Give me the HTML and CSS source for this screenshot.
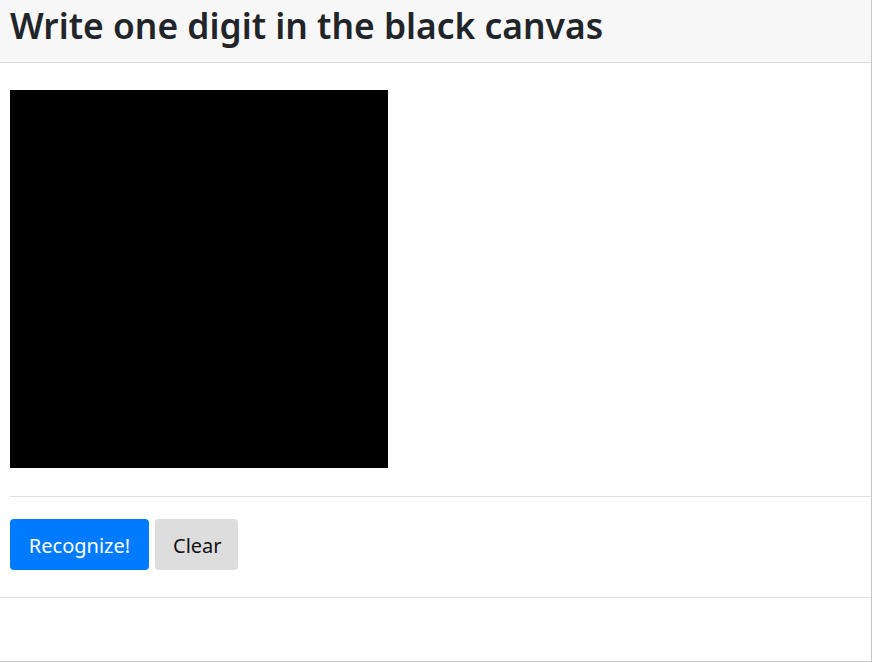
FILE: index.html
```html
<!DOCTYPE html>
<html>
<head>
<meta charset="utf-8">
<link rel="stylesheet" href="styles.css">
</head>
<body>
<div class="frame">
  <header class="head">
    <h1 class="title">Write one digit in the black canvas</h1>
  </header>
  <main class="body">
    <div class="canvas"></div>
    <hr class="rule">
    <div class="actions">
      <button class="btn btn-primary">Recognize!</button>
      <button class="btn btn-light">Clear</button>
    </div>
  </main>
  <div class="foot"></div>
</div>
</body>
</html>
```
FILE: styles.css
```css
html, body {
  margin: 0;
  padding: 0;
  background: #fff;
}
body {
  font-family: "Noto Sans", "Open Sans", sans-serif;
  color: #212529;
}
.frame {
  box-sizing: border-box;
  width: 872px;
  height: 662px;
  border-right: 1px solid #c8c8c8;
  border-bottom: 1px solid #c8c8c8;
}
.head {
  height: 62px;
  background: #f7f7f7;
  border-bottom: 1px solid #dcdcdc;
  display: flex;
  align-items: center;
  padding-left: 10px;
}
.title {
  margin: 0;
  font-size: 35.4px;
  font-weight: 600;
  line-height: 1;
  color: #212529;
  transform: translateY(-5px);
}
.body {
  padding: 27px 0 0 10px;
}
.canvas {
  width: 378px;
  height: 378px;
  background: #000;
}
.rule {
  margin: 28px 0 0 0;
  border: 0;
  border-top: 1px solid #e0e0e0;
  height: 0;
}
.actions {
  display: flex;
  gap: 6px;
  padding: 22px 0 27px;
}
.btn {
  font-family: inherit;
  font-size: 20px;
  height: 51px;
  border: 0;
  border-radius: 4px;
  padding: 0 18px 0;
  line-height: 1;
  padding-top: 2px;
}
.btn-primary {
  background: #007bff;
  color: #fff;
  width: 139px;
}
.btn-light {
  background: #dddddd;
  color: #111;
  width: 83px;
}
.foot {
  border-top: 1px solid #e0e0e0;
}
```
